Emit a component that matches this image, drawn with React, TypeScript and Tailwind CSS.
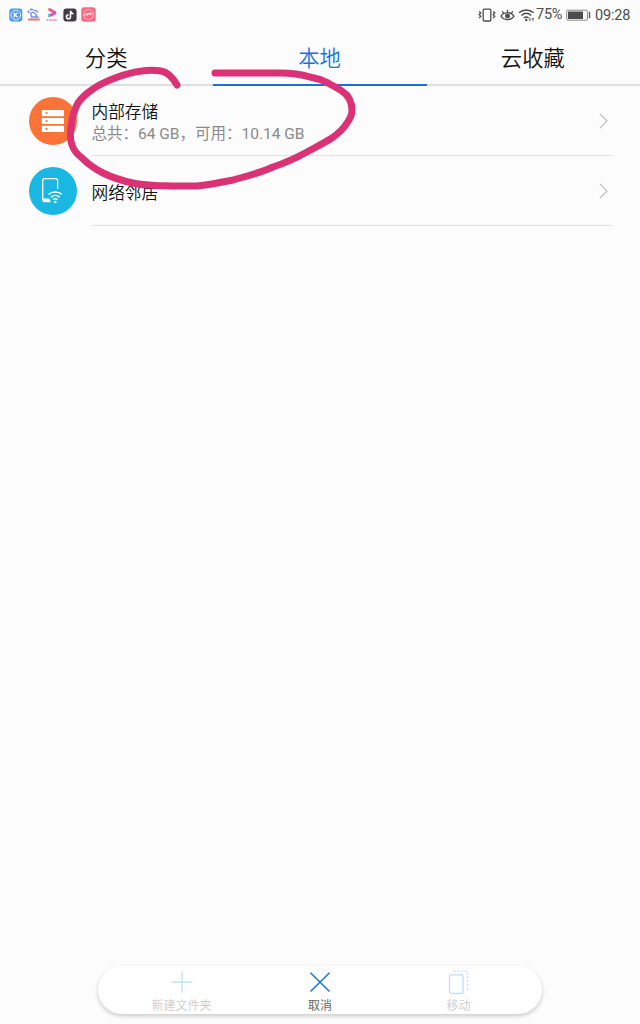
import type { ReactNode } from 'react';

function StatusLeft() {
  return (
    <div className="flex items-center gap-[4px]">
      <svg className="h-[14px] w-[14px]" viewBox="0 0 14 14" fill="none">
        <rect x="0.3" y="0.5" width="13" height="13" rx="3" fill="#4c9af0" />
        <circle cx="6.8" cy="7" r="4.8" stroke="#e3f0ff" strokeWidth="1" />
        <path d="M5.3 4.6v4.8M8.6 4.8 5.8 7l2.8 2.3" stroke="#fff" strokeWidth="1.3" />
      </svg>
      <svg className="h-[14px] w-[14px]" viewBox="0 0 14 14" fill="none">
        <ellipse cx="1.6" cy="3.8" rx="1.1" ry="1.5" fill="#7a9de8" />
        <ellipse cx="4.4" cy="1.5" rx="1.7" ry="1" fill="#6d90df" />
        <path d="M6.5 2.500c2-.3 4 .6 4.200 2.200M3.800 5.200c2-1.500 4.500-.5 5 1.500l2 2.300H4.500z" stroke="#6d90df" strokeWidth="1.300" />
        <path d="M1 11.500h12" stroke="#e9a19b" strokeWidth="2.600" />
        <path d="M3 11.500h8" stroke="#c96c6c" strokeWidth="1" strokeDasharray="1.500 1" />
      </svg>
      <svg className="h-[14px] w-[14px]" viewBox="0 0 14 14" fill="none">
        <path d="M4.500 1.500 9.800 4.500" stroke="#f8558a" strokeWidth="2.800" strokeLinecap="round" />
        <path d="M9.800 5 5.800 7.300" stroke="#d653b4" strokeWidth="2.800" strokeLinecap="round" />
        <path d="M4 6.500v2" stroke="#45cbe6" strokeWidth="2" strokeLinecap="round" />
        <path d="M1.500 12h11" stroke="#e6a0bb" strokeWidth="1.800" strokeDasharray="1.800 .7" />
      </svg>
      <svg className="h-[14px] w-[14px]" viewBox="0 0 14 14" fill="none">
        <rect x="0.4" y="0.5" width="13.200" height="13" rx="3" fill="#403a46" />
        <path d="M7.500 2.800v5.900a2 2 0 1 1-2-2M7.500 3c.3 1.700 1.500 2.600 3 2.700" stroke="#fff" strokeWidth="1.600" />
      </svg>
      <svg className="-mt-[1px] h-[15px] w-[15px]" viewBox="0 0 15 15" fill="none">
        <rect x="0.200" y="0.200" width="14.500" height="14.500" rx="3.200" fill="#f46b83" />
        <circle cx="7.500" cy="7.500" r="5" stroke="#ffb6c2" strokeWidth="1" />
        <path d="M3.500 9c1-2.500 2.500-3 3-1 1.500-2.500 3-2.500 3-.5l2-1" stroke="#ffe8eb" strokeWidth="1.200" />
      </svg>
    </div>
  );
}

function StatusRight() {
  return (
    <div className="flex items-center text-[#4e4e4e]">
      <svg className="h-[16px] w-[18px]" viewBox="0 0 18 16" fill="none" stroke="currentColor" strokeWidth="1.300">
        <rect x="5.200" y="2.200" width="7.600" height="11.800" rx="1" />
        <path d="M1.200 4.500 2.800 6 1.200 7.600 2.800 9.200 1.200 11M15.200 4.500 16.800 6 15.200 7.600 16.800 9.200 15.200 11" />
      </svg>
      <svg className="ml-[4px] h-[16px] w-[15px]" viewBox="0 0 16 16" fill="none" stroke="currentColor" strokeWidth="1.300">
        <path d="M1 9.200c3.500-5 10.500-5 14 0-3.500 5-10.500 5-14 0ZM2.200 4l1.700 2M8 2.500v2.800M13.800 4l-1.700 2" />
        <circle cx="8" cy="9" r="2" fill="currentColor" />
      </svg>
      <svg className="ml-[3px] h-[16px] w-[17px]" viewBox="0 0 17 16" fill="none" stroke="currentColor" strokeWidth="1.500">
        <path d="M1 5.800c4-3.700 10.500-3.700 14.500 0M3.400 8.500c3-2.700 6.800-2.700 9.800 0M5.800 11c1.500-1.300 3.300-1.300 4.800 0" />
        <circle cx="8.200" cy="13" r="1.200" fill="currentColor" stroke="none" />
        <path d="M12 10.500v3M15 11v3M11.200 12.500l.8 1 .8-1M14.200 12l.8-1 .8 1" strokeWidth=".8" />
      </svg>
      <span className="w-[30px] whitespace-nowrap pl-[1px] text-[14.500px] leading-4 tracking-[-0.250px]">75%</span>
      <svg className="ml-[1px] h-[14px] w-[25px]" viewBox="0 0 25 14" fill="none">
        <rect x="0.700" y="2.200" width="20.700" height="10" rx="1" stroke="#8a8a8a" strokeWidth="1" />
        <path d="M2 3.500h15v7.500H2z" fill="#4c4c4c" />
        <path d="M23.500 3.800v6.400" stroke="#5a5a5a" strokeWidth="1.400" />
      </svg>
      <span className="ml-[4px] mt-[1px] w-[36px] whitespace-nowrap text-[14.500px] leading-4 tracking-[-0.150px]">09:28</span>
    </div>
  );
}

function Tab({ label, active = false }: { label: string; active?: boolean }) {
  return (
    <div
      className={
        active
          ? 'flex h-[56px] flex-1 justify-center border-b-2 border-[#1873d8] pr-[1px] pt-[13px] text-[21.300px] font-[350] leading-8 text-[#1674d9]'
          : 'flex h-[56px] flex-1 justify-center border-b-2 border-[#dedede] pr-[1px] pt-[13px] text-[21.300px] font-[350] leading-8 text-[#111]'
      }
    >
      {label}
    </div>
  );
}

function StorageRow({ icon, title, detail }: { icon: ReactNode; title: string; detail?: string }) {
  return (
    <div className="flex h-[70px] items-start pl-[29px] pr-[28px]">
      <div className="mt-[11px] h-12 w-12 shrink-0">{icon}</div>
      <div className="ml-[14.500px] flex h-full flex-1 items-center justify-between border-b border-[#e2e2e2] pr-[3px]">
        <div className="flex flex-col pt-[6px]">
          <span className="text-[16.700px] font-[350] leading-[22px] text-[#111]">{title}</span>
          {detail && <span className="whitespace-nowrap text-[15.500px] leading-[21px] text-[#8a8a8a]">{detail}</span>}
        </div>
        <svg className="h-[16px] w-[10px]" viewBox="0 0 10 16" fill="none">
          <path d="M1 1 8 8 1 15" stroke="#c3c3c3" strokeWidth="1.300" />
        </svg>
      </div>
    </div>
  );
}

function DiskIcon() {
  return (
    <svg className="h-12 w-12" viewBox="0 0 48 48">
      <circle cx="24" cy="24" r="24" fill="#fb7337" />
      <rect x="12.800" y="13" width="22.200" height="6.200" rx=".5" fill="#fff" />
      <rect x="12.800" y="20.900" width="22.200" height="6.200" rx=".5" fill="#fff" />
      <rect x="12.800" y="28.800" width="22.200" height="6.200" rx=".5" fill="#fff" />
      <circle cx="17.500" cy="16.100" r="1.100" fill="#fb7337" />
      <circle cx="17.500" cy="24" r="1.100" fill="#fb7337" />
      <circle cx="17.500" cy="31.900" r="1.100" fill="#fb7337" />
    </svg>
  );
}

function NetworkIcon() {
  return (
    <svg className="h-12 w-12" viewBox="0 0 48 48" fill="none" stroke="#fff">
      <circle cx="24" cy="24" r="24" fill="#19b7e1" stroke="none" />
      <path d="M21 34.500h-5.500a1.800 1.800 0 0 1-1.800-1.800V13.500a1.800 1.800 0 0 1 1.800-1.800h11.300a1.800 1.800 0 0 1 1.800 1.800v8.500" strokeWidth="1.300" />
      <path d="M14 31.500h6l2 3.500h-6.500a1.500 1.500 0 0 1-1.500-1.500z" fill="#fff" stroke="none" />
      <path d="M19.500 27.600c3.800-3.500 9.700-3.500 13.500 0M21.800 30.200c2.600-2.300 6.300-2.300 8.900 0M24 32.700c1.300-1.200 3.200-1.200 4.500 0" strokeWidth="1.400" />
      <circle cx="26.300" cy="35" r="1.300" fill="#fff" stroke="none" />
    </svg>
  );
}

function Action({ icon, label, enabled = false }: { icon: ReactNode; label: string; enabled?: boolean }) {
  return (
    <div className="flex w-[138.500px] flex-col items-center pt-[4px]">
      <div className="h-6 w-6">{icon}</div>
      <span
        className={
          enabled
            ? 'mt-[4px] text-[12px] leading-4 text-[#666]'
            : 'mt-[4px] text-[12px] leading-4 text-[#cfcfcf]'
        }
      >
        {label}
      </span>
    </div>
  );
}

export default function App() {
  return (
    <div
      lang="zh-CN"
      className="relative flex h-[1024px] w-[640px] flex-col overflow-hidden bg-[#fcfcfc] font-[Roboto,'Noto_Sans_CJK_SC',sans-serif]"
    >
      <header className="flex h-[30px] shrink-0 items-center justify-between pl-[9px] pr-[9px]">
        <StatusLeft />
        <StatusRight />
      </header>
      <nav className="flex shrink-0">
        <Tab label="分类" />
        <Tab label="本地" active />
        <Tab label="云收藏" />
      </nav>
      <main className="flex-1">
        <StorageRow icon={<DiskIcon />} title="内部存储" detail="总共：64 GB，可用：10.14 GB" />
        <StorageRow icon={<NetworkIcon />} title="网络邻居" />
      </main>
      <footer className="mx-auto mb-[10px] flex h-[48px] w-[444px] shrink-0 justify-center rounded-full bg-white shadow-[0_2px_4px_rgba(0,0,0,0.2)]">
        <Action
          label="新建文件夹"
          icon={
            <svg viewBox="0 0 24 24" fill="none">
              <path d="M12 1.500v21M1.500 12h21" stroke="#c2dffa" strokeWidth="1.300" />
            </svg>
          }
        />
        <Action
          label="取消"
          enabled
          icon={
            <svg viewBox="0 0 24 24" fill="none">
              <path d="m2.500 2.800 19 18.700M21.500 2.800 2.500 21.500" stroke="#1876d9" strokeWidth="1.500" />
            </svg>
          }
        />
        <Action
          label="移动"
          icon={
            <svg viewBox="0 0 24 24" fill="none" stroke="#bedcf9">
              <rect x="2.500" y="4.800" width="13.500" height="18.500" rx="1.500" strokeWidth="1.300" />
              <path d="M6.500 1.200h12.500a1.500 1.500 0 0 1 1.500 1.500v17" strokeWidth="1.300" strokeDasharray="2 1.700" />
            </svg>
          }
        />
      </footer>
      <svg className="pointer-events-none absolute left-0 top-0 h-[240px] w-[640px]" viewBox="0 0 640 240" fill="none">
        <path
          d="M177 85C173 78 168 72 161 71C155 70 148 70 142 71C132 72 123 75 115 78C107 81 100 84 93 89C87 93 82 97 78 103C74 110 72 118 71 127C70 134 70 140 72 145C74 151 78 155 82 158C88 164 95 169 103 173C113 178 123 181 133 183C141 185 149 185 157 185.500C170 186 184 186 197 186C209 185 221 182 233 180C247 176 260 173 273 167C285 163 296 158 307 152C316 147 324 143 332 138C339 133 344 128 347 123C350 119 352 114 352 110C352 102 348 95 343 92C338 88 333 86 328 83C322 80 316 78 310 77C300 74 290 73 280 73H215"
          stroke="#da3274"
          strokeWidth="7"
          strokeLinecap="round"
          strokeLinejoin="round"
        />
      </svg>
    </div>
  );
}
